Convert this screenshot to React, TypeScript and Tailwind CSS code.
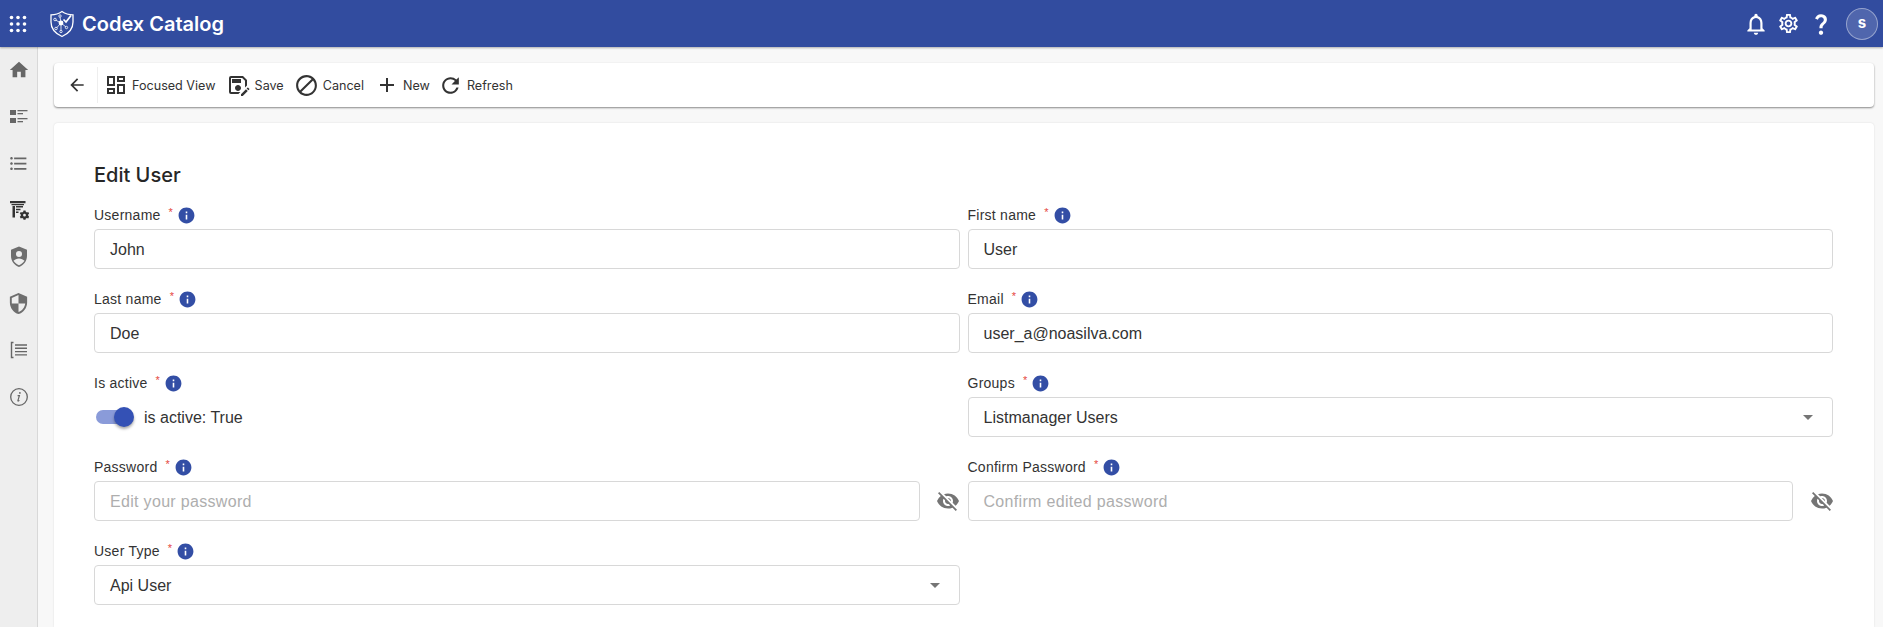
import type { ReactNode } from 'react';
import {
  MdAdd,
  MdArrowBack,
  MdArrowDropDown,
  MdBlock,
  MdFormatListBulleted,
  MdHome,
  MdInfo,
  MdOutlineDashboard,
  MdOutlineNotifications,
  MdOutlineSaveAs,
  MdOutlineSettings,
  MdQuestionMark,
  MdRefresh,
  MdSecurity,
  MdVisibilityOff,
} from 'react-icons/md';

const helv = 'font-["Liberation_Sans",Arial,sans-serif]';

function AppsGrid() {
  const spots = [2.5, 9, 15.5];
  return (
    <svg width="18" height="18" viewBox="0 0 18 18" fill="#fff">
      {spots.map((y) => spots.map((x) => <circle key={`${x}-${y}`} cx={x} cy={y} r="1.8" />))}
    </svg>
  );
}

function Logo() {
  return (
    <svg width="26" height="28" viewBox="0 0 26 28" fill="none" stroke="#fff">
      <path d="M13 1.5C16 3.6 20 4.8 24 4.8V12c0 6.5-4.4 11.6-11 14.5C6.400 23.600 2 18.500 2 12V4.800C6 4.800 10 3.600 13 1.500Z" strokeWidth="1.300" />
      <circle cx="12" cy="13" r="2.400" fill="#fff" stroke="none" />
      <g strokeWidth="0.800">
        <path d="M12 13 6.500 10M12 13 7.500 18M12 13 12 20.500M12 13 11 7M12 13 17 17" />
        <circle cx="6" cy="9.500" r="1.300" />
        <circle cx="7" cy="18.500" r="1.300" />
        <circle cx="12" cy="21.500" r="1.200" />
        <circle cx="11" cy="6" r="1.200" />
        <circle cx="17.500" cy="17.500" r="1.200" />
      </g>
      <path d="M14.500 9.500 17 12l5-6.500" strokeWidth="1.700" />
    </svg>
  );
}

function SummaryListIcon() {
  return (
    <svg width="20" height="20" viewBox="0 0 20 20" fill="#666">
      <rect x="1" y="3" width="6" height="5" />
      <rect x="1" y="11" width="6" height="5" />
      <rect x="8.500" y="3" width="10" height="1.300" />
      <rect x="8.500" y="6" width="5.500" height="1.300" />
      <rect x="8.500" y="11" width="10" height="1.300" />
      <rect x="8.500" y="14" width="5.500" height="1.300" />
    </svg>
  );
}

function TableGearIcon() {
  return (
    <svg width="20" height="20" viewBox="0 0 20 20" fill="#333">
      <path d="M1 1h15.500v2.200H1zM2.500 4h12.500v1.300H2.500zM3.500 6h2.500v11.500H3.500zM7 6h7v1.400H7zM7 8.800h4.500v1.400H7zM7 11.600h2.500V13H7z" />
      <path d="M14.500 10.500h2l.3 1.300 1.200.6 1.200-.5 1 1.700-1 .9v1.300l1 .9-1 1.700-1.200-.5-1.200.6-.3 1.300h-2l-.3-1.300-1.200-.6-1.200.5-1-1.700 1-.9v-1.300l-1-.9 1-1.700 1.200.5 1.200-.6zM15.500 13.800a1.400 1.400 0 1 0 0 2.800 1.400 1.400 0 0 0 0-2.800z" fillRule="evenodd" />
    </svg>
  );
}

function UserShieldIcon() {
  return (
    <svg width="24" height="24" viewBox="0 0 24 24" fill="#6e6e6e">
      <path
        fillRule="evenodd"
        d="M12 1.500 20 4.700v6.400c0 4.900-3.300 9.300-8 10.900-4.700-1.600-8-6-8-10.900V4.700zM12 6a3 3 0 1 0 0 6 3 3 0 0 0 0-6zM6.500 15.800C8 18 10 19.500 12 20.200c2-.7 4-2.200 5.500-4.400-1.200-1.400-3.300-2.400-5.500-2.400s-4.300 1-5.500 2.400z"
      />
    </svg>
  );
}

function BracketListIcon() {
  return (
    <svg width="20" height="20" viewBox="0 0 20 20" fill="none" stroke="#666" strokeWidth="1.400">
      <path d="M4.500 2.500H2.500v15h2" />
      <path d="M6 5h12M6 8.300h12M6 11.600h12M6 14.900h12" />
    </svg>
  );
}

function ItalicInfoIcon() {
  return (
    <svg width="20" height="20" viewBox="0 0 20 20" fill="none" stroke="#666">
      <circle cx="10" cy="10" r="8.300" strokeWidth="1.300" />
      <path d="M8.600 8.700h1.800l-1.500 5c-.1.500.4.600 1.500-.3" strokeWidth="1.200" />
      <circle cx="10.900" cy="5.900" r="0.900" fill="#666" stroke="none" />
    </svg>
  );
}

const railIcons: ReactNode[] = [
  <MdHome size={22} color="#666" />,
  <SummaryListIcon />,
  <MdFormatListBulleted size={21} color="#666" />,
  <TableGearIcon />,
  <UserShieldIcon />,
  <MdSecurity size={23} color="#6e6e6e" />,
  <BracketListIcon />,
  <ItalicInfoIcon />,
];

function ToolButton({ icon, label, className }: { icon: ReactNode; label: string; className: string }) {
  return (
    <div className={`flex items-center ${className}`}>
      {icon}
      <span className="mt-[2px] font-['Inter',sans-serif] text-[12.6px] text-[#333]">{label}</span>
    </div>
  );
}

function FieldLabel({ text }: { text: string }) {
  return (
    <div className={`${helv} flex h-5 mb-1 items-center text-[14px] tracking-[0.25px] text-[#333]`}>
      <span>{text}</span>
      <span className="ml-[8px] -mt-[5px] text-[11px] text-[#e5483f]">*</span>
      <MdInfo size={19} color="#334ea5" className="ml-[4px]" />
    </div>
  );
}

function TextBox({ value, placeholder, select }: { value?: string; placeholder?: string; select?: boolean }) {
  return (
    <div
      className={`${helv} flex h-10 flex-1 items-center justify-between rounded-[4px] border border-[#d8d8d8] bg-white pl-[15px] pr-[14px] text-[16px] ${
        placeholder ? 'tracking-[0.32px] text-[#aeaeae]' : 'text-[#333]'
      }`}
    >
      <span className="mt-[2px]">{value ?? placeholder}</span>
      {select && <MdArrowDropDown size={24} color="#757575" className="-mr-[2px]" />}
    </div>
  );
}

function Field({ label, value, placeholder, select, secret }: { label: string; value?: string; placeholder?: string; select?: boolean; secret?: boolean }) {
  return (
    <div>
      <FieldLabel text={label} />
      <div className="flex items-center">
        <TextBox value={value} placeholder={placeholder} select={select} />
        {secret && (
          <div className="flex w-[40px] justify-center pl-[17px]">
            <MdVisibilityOff size={24} color="#757575" className="shrink-0" />
          </div>
        )}
      </div>
    </div>
  );
}

export default function App() {
  return (
    <div className="flex h-[627px] w-full flex-col overflow-hidden bg-[#f8f8f8]">
      <header className="z-10 flex h-[47px] shrink-0 items-center bg-[#324c9f] shadow-[0_1px_2px_rgba(0,0,0,0.3)]">
        <div className="ml-[9px] flex w-[18px] justify-center">
          <AppsGrid />
        </div>
        <div className="ml-[22px]">
          <Logo />
        </div>
        <span className="ml-[7px] font-['Inter',sans-serif] text-[20px] font-semibold text-white">Codex Catalog</span>
        <div className="ml-auto flex items-center pr-[5px]">
          <MdOutlineNotifications size={26} color="#fff" />
          <MdOutlineSettings size={23} color="#fff" className="ml-[8px]" />
          <MdQuestionMark size={26} color="#fff" className="ml-[8px]" />
          <div className="ml-[12px] flex h-8 w-8 items-center justify-center rounded-full border border-white/40 bg-white/15 font-['Inter',sans-serif] text-[15px] font-bold text-white">
            s
          </div>
        </div>
      </header>

      <div className="flex min-h-0 flex-1">
        <aside className="flex w-[38px] shrink-0 flex-col items-center gap-[24.700px] border-r border-[#d8d8d8] bg-[#eeeeee] pt-[12px]">
          {railIcons.map((icon, i) => (
            <div key={i} className="flex h-[22px] items-center justify-center">
              {icon}
            </div>
          ))}
        </aside>

        <main className="flex min-w-0 flex-1 flex-col pl-4 pr-[9px] pt-4">
          <div className="flex h-11 shrink-0 items-center rounded-[4px] bg-white shadow-[0_1px_2px_rgba(0,0,0,0.45)]">
            <div className="flex h-9 w-[44px] items-center justify-center border-r border-[#eeeeee] pl-[2px]">
              <MdArrowBack size={20} color="#333" />
            </div>
            <ToolButton className="ml-[6px] gap-[4px]" icon={<MdOutlineDashboard size={24} color="#333" />} label="Focused View" />
            <ToolButton className="ml-[10px] gap-[5px]" icon={<MdOutlineSaveAs size={24} color="#333" />} label="Save" />
            <ToolButton className="ml-[10px] gap-[4px]" icon={<MdBlock size={25} color="#333" />} label="Cancel" />
            <ToolButton className="ml-[11px] gap-[4px]" icon={<MdAdd size={24} color="#333" />} label="New" />
            <ToolButton className="ml-[8px] gap-[4px]" icon={<MdRefresh size={25} color="#333" />} label="Refresh" />
          </div>

          <div className="mt-4 flex-1 rounded-t-[4px] bg-white pl-10 pr-[41px] pt-[38px] shadow-[0_0_2px_rgba(0,0,0,0.12)]">
            <h1 className="mb-[16px] h-7 font-['Inter',sans-serif] text-[20px] leading-7 font-medium text-[#262626]">Edit User</h1>
            <div className="grid grid-cols-2 gap-x-2 gap-y-5">
              <Field label="Username" value="John" />
              <Field label="First name" value="User" />
              <Field label="Last name" value="Doe" />
              <Field label="Email" value="user_a@noasilva.com" />
              <div>
                <FieldLabel text="Is active" />
                <div className="flex h-10 items-center">
                  <div className="ml-[2px] flex h-[14px] w-[36px] items-center justify-end rounded-full bg-[#8a9bd9]">
                    <div className="-mr-[2px] h-5 w-5 shrink-0 rounded-full bg-[#3451b5] shadow-[0_2px_3px_rgba(0,0,0,0.35)]" />
                  </div>
                  <span className={`${helv} ml-[12px] mt-[2px] text-[16px] text-[#333]`}>is active: True</span>
                </div>
              </div>
              <Field label="Groups" value="Listmanager Users" select />
              <Field label="Password" placeholder="Edit your password" secret />
              <Field label="Confirm Password" placeholder="Confirm edited password" secret />
              <Field label="User Type" value="Api User" select />
            </div>
          </div>
        </main>
      </div>
    </div>
  );
}
